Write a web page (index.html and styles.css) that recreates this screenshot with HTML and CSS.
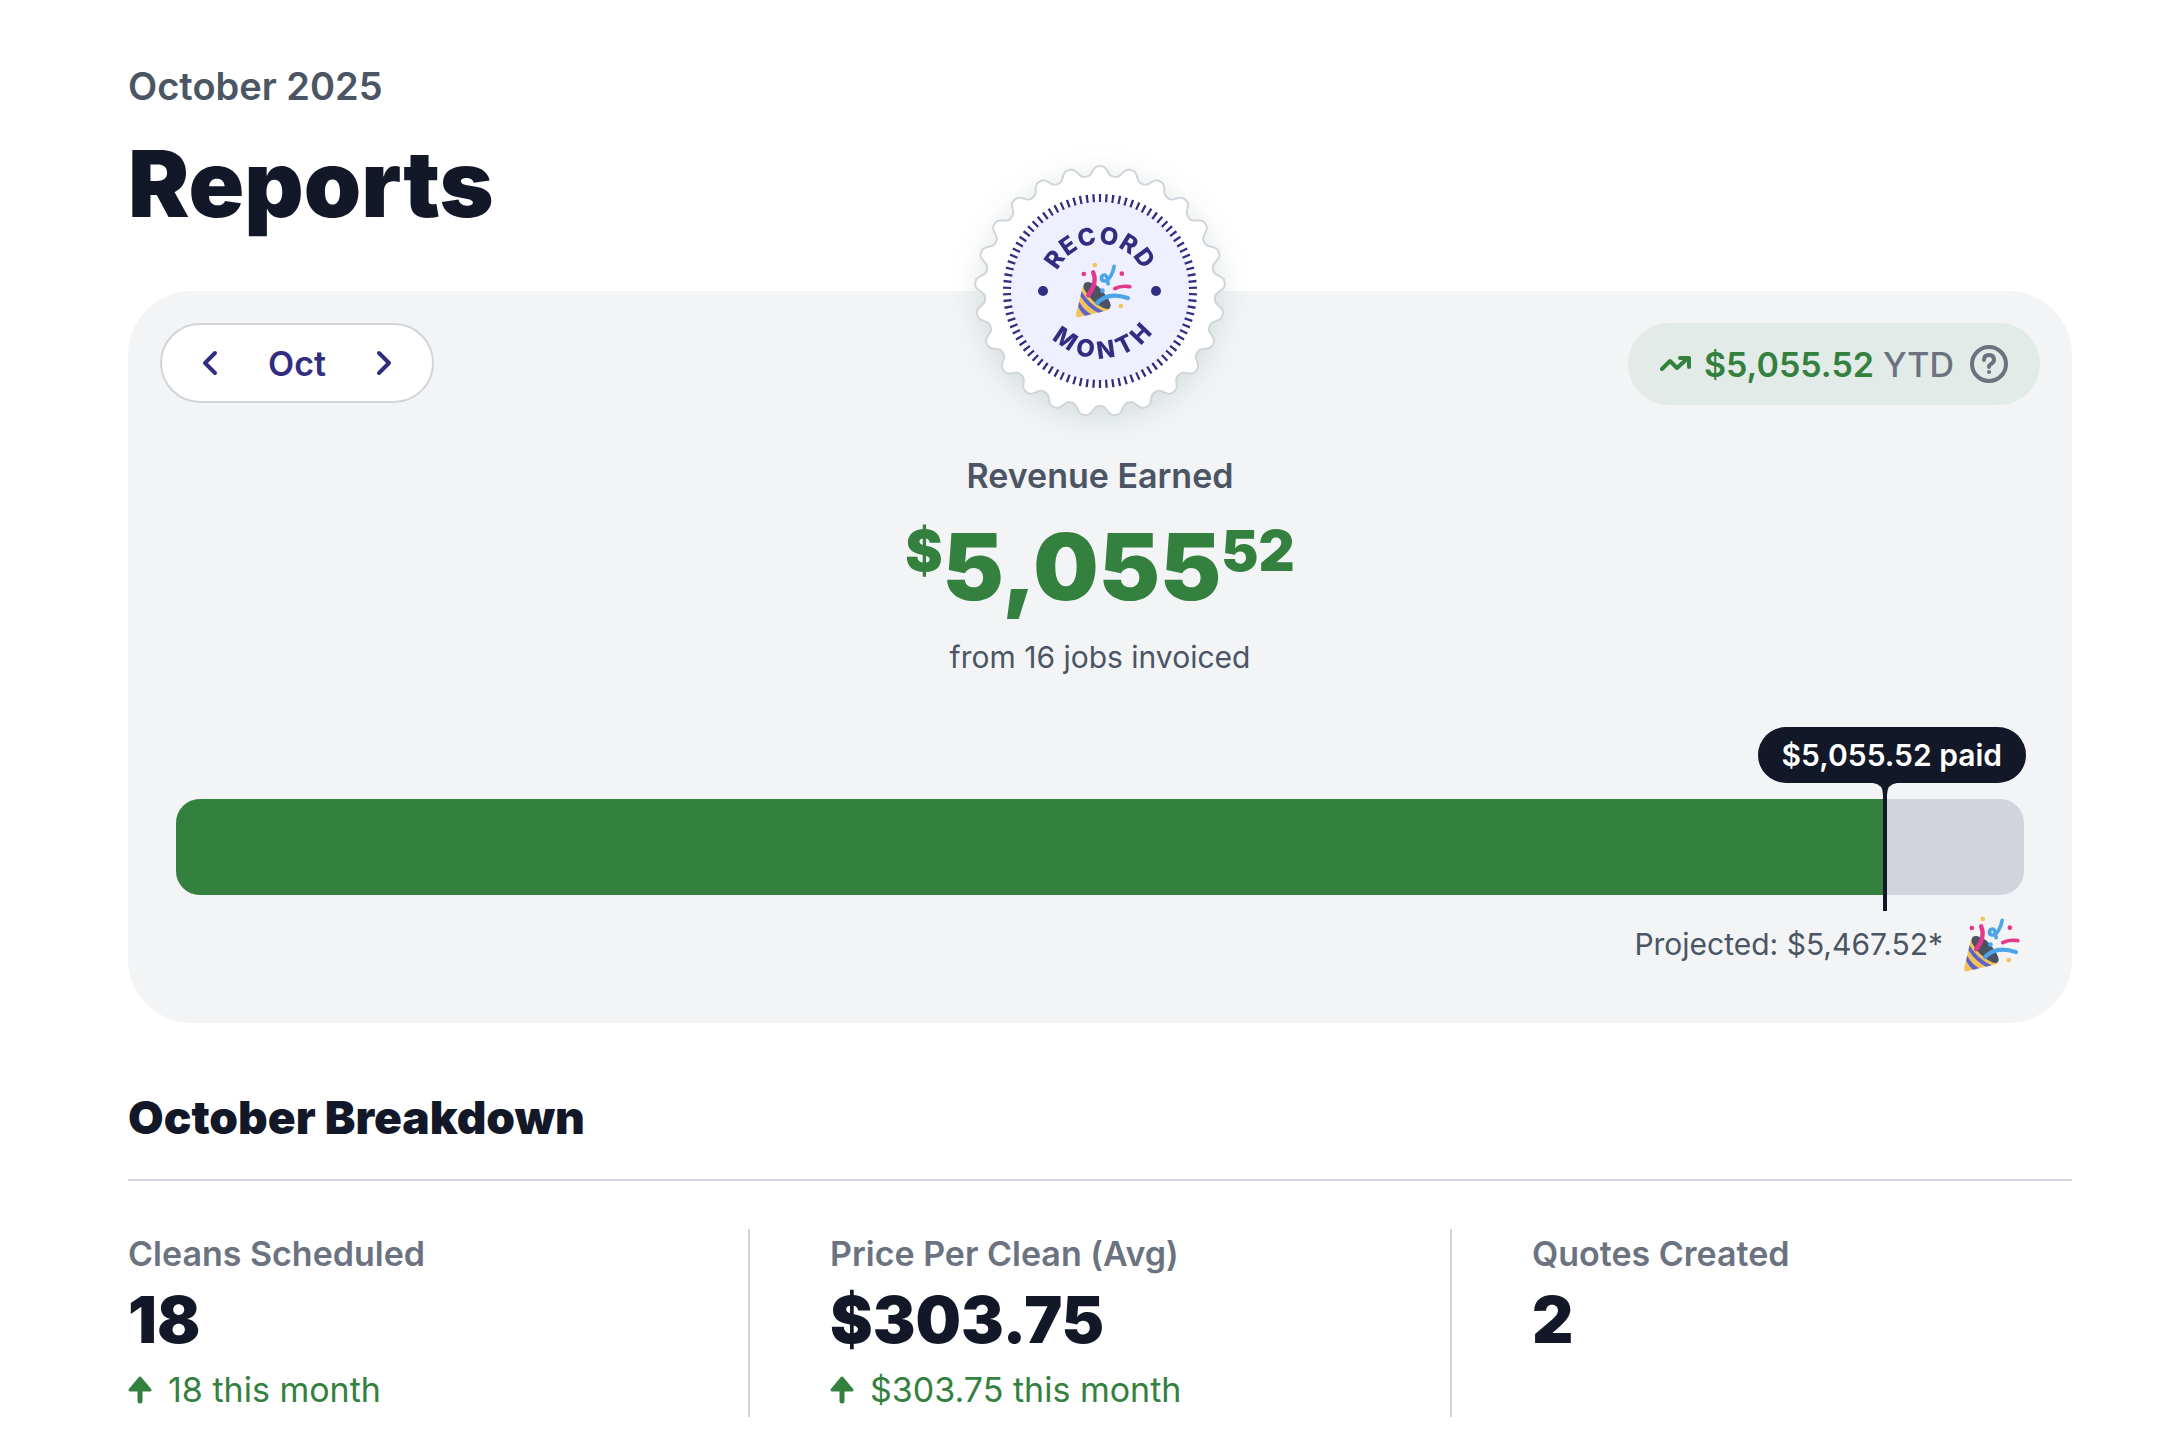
FILE: index.html
```html
<!DOCTYPE html>
<html lang="en">
<head>
    <meta charset="UTF-8">
    <meta name="viewport" content="width=device-width, initial-scale=1.0">
    <title>Reports</title>
    <link rel="stylesheet" href="styles.css">
</head>
<body>
    <!-- Shared confetti icon -->
    <svg class="sprite" aria-hidden="true">
        <symbol id="party" viewBox="70 48 170 168">
            <path d="M94 116 L73 203 Q71 216 84 213 L174 191 Q140 170 94 116 Z" fill="#f2c25b"/>
            <path d="M89 136 L86 151 Q108 186 139 200 L155 196 Q114 178 89 136 Z" fill="#5b62c9"/>
            <path d="M82 167 L79 182 Q87 199 100 209 L118 205 Q95 191 82 167 Z" fill="#5b62c9"/>
            <path d="M96 128 Q92 106 110 108 Q136 111 160 145 Q184 178 174 187 Q168 191 155 186 Q118 168 96 128 Z" fill="#4b5262"/>
            <g fill="none" stroke-linecap="round" stroke-linejoin="round">
                <path d="M124 79 Q138 110 109 148" stroke="#e4388c" stroke-width="13"/>
                <path d="M189 128 Q206 118 234 122" stroke="#e4388c" stroke-width="11"/>
                <path d="M136 171 Q168 136 228 156" stroke="#4ba5e8" stroke-width="13"/>
                <path d="M187 61 C184 80 172 106 157 105 C145 103 147 88 158 87 C167 86 166 104 169 113" stroke="#4ba5e8" stroke-width="11"/>
            </g>
            <circle cx="96" cy="84" r="7" fill="#e4388c"/>
            <circle cx="210" cy="83" r="7" fill="#e4388c"/>
            <circle cx="129" cy="57" r="7" fill="#f2c25b"/>
            <circle cx="207" cy="180" r="7" fill="#f2c25b"/>
            <circle cx="152" cy="134" r="7" fill="#4ba5e8"/>
        </symbol>
    </svg>

    <main class="page">
        <header class="page-header">
            <p class="period">October 2025</p>
            <h1>Reports</h1>
        </header>

        <section class="revenue-card">
            <svg class="badge" viewBox="-130 -130 260 260" role="img" aria-label="Record month">
                <path class="badge-edge" id="badge-edge"/>
                <circle r="91" fill="#eef0ff"/>
                <circle class="badge-ticks" r="93" pathLength="360"/>
                <circle class="badge-dot" cx="-57" r="5"/>
                <circle class="badge-dot" cx="56" r="5"/>
                <path id="arc-top" d="M-47 0 A47 47 0 0 1 47 0" fill="none"/>
                <path id="arc-bottom" d="M-67 6 A67 67 0 0 0 67 -6" fill="none"/>
                <text class="badge-text"><textPath href="#arc-top" startOffset="50%">RECORD</textPath></text>
                <text class="badge-text badge-text-bottom"><textPath href="#arc-bottom" startOffset="50%">MONTH</textPath></text>
                <use href="#party" x="-25" y="-29" width="57" height="56"/>
            </svg>

            <div class="toolbar">
                <div class="month-nav">
                    <button type="button" aria-label="Previous month">
                        <svg width="18" height="28" viewBox="0 0 18 28"><path d="M14 4 L4 14 L14 24"/></svg>
                    </button>
                    <span>Oct</span>
                    <button type="button" aria-label="Next month">
                        <svg width="18" height="28" viewBox="0 0 18 28"><path d="M4 4 L14 14 L4 24"/></svg>
                    </button>
                </div>
                <div class="ytd">
                    <svg class="ytd-trend" width="32" height="20" viewBox="0 0 32 20"><path d="M2 15 L10 7 L17 14 L28 4 M20 4 H29 V13"/></svg>
                    <p><strong>$5,055.52</strong> YTD</p>
                    <button type="button" class="help" aria-label="About this total">
                        <svg width="38" height="38" viewBox="0 0 38 38">
                            <circle cx="19" cy="19" r="17"/>
                            <path d="M14 15 Q14 10 19 10 Q24 10 24 15 Q24 17 21 19 Q19 20 19 22"/>
                            <circle class="help-point" cx="19" cy="27" r="2"/>
                        </svg>
                    </button>
                </div>
            </div>

            <div class="revenue">
                <h2>Revenue Earned</h2>
                <p class="amount"><span>$</span>5,055<span>52</span></p>
                <p class="source">from 16 jobs invoiced</p>
            </div>

            <div class="progress">
                <div class="progress-bar">
                    <div class="progress-fill" style="width: 92.46%"></div>
                </div>
                <div class="marker" style="left: 92.46%">
                    <svg width="24" height="12" viewBox="0 0 24 12"><path d="M0 0 H24 Q14 1 14 12 H10 Q10 1 0 0 Z" fill="#121828"/></svg>
                </div>
                <span class="paid">$5,055.52 paid</span>
            </div>
            <div class="projected">
                <span>Projected: $5,467.52*</span>
                <svg width="57" height="56" aria-hidden="true"><use href="#party"/></svg>
            </div>
        </section>

        <section class="breakdown">
            <h2>October Breakdown</h2>
            <div class="stats">
                <div class="stat">
                    <h3>Cleans Scheduled</h3>
                    <p class="value">18</p>
                    <p class="change">
                        <svg width="24" height="30" viewBox="0 0 24 30"><path d="M12 16 V26" stroke-width="5"/><path class="head" d="M12 3 L22 15 H2 Z"/></svg>
                        18 this month
                    </p>
                </div>
                <div class="stat">
                    <h3>Price Per Clean (Avg)</h3>
                    <p class="value">$303.75</p>
                    <p class="change">
                        <svg width="24" height="30" viewBox="0 0 24 30"><path d="M12 16 V26" stroke-width="5"/><path class="head" d="M12 3 L22 15 H2 Z"/></svg>
                        $303.75 this month
                    </p>
                </div>
                <div class="stat">
                    <h3>Quotes Created</h3>
                    <p class="value">2</p>
                </div>
            </div>
        </section>
    </main>

    <script src="badge.js"></script>
</body>
</html>
```

FILE: styles.css
```css
* {
    box-sizing: border-box;
}

body {
    margin: 0;
    background: #ffffff;
    color: #121828;
    font-family: Inter, "Liberation Sans", sans-serif;
}

h1, h2, h3, p {
    margin: 0;
}

button {
    padding: 0;
    border: none;
    background: none;
    cursor: pointer;
}

.sprite {
    display: none;
}

.page {
    padding: 62px 100px 20px 128px;
}

.period {
    color: #4b5563;
    font-size: 38px;
    font-weight: 600;
    line-height: 48px;
}

h1 {
    margin: 26px 0 59px;
    font-size: 92px;
    font-weight: 900;
    line-height: 96px;
}

/* Revenue card */
.revenue-card {
    position: relative;
    padding: 32px 32px 51px;
    border-radius: 64px;
    background: #f2f4f6;
}

.badge {
    position: absolute;
    top: 0;
    left: 50%;
    width: 260px;
    height: 260px;
    transform: translate(-50%, -50%);
    overflow: visible;
    filter: drop-shadow(0 6px 14px rgba(40, 90, 70, 0.14));
}

.badge-edge {
    fill: #ffffff;
    stroke: #d1d5db;
    stroke-width: 2;
}

.badge-ticks {
    fill: none;
    stroke: #312e81;
    stroke-width: 8;
    stroke-dasharray: 1.4 2.6;
    stroke-dashoffset: 0.7;
    transform: rotate(-90deg);
}

.badge-dot {
    fill: #312e81;
}

.badge-text {
    fill: #312e81;
    font-size: 24px;
    font-weight: 800;
    letter-spacing: 1px;
    text-anchor: middle;
}

.badge-text-bottom {
    letter-spacing: 5px;
}

.toolbar {
    display: flex;
    justify-content: space-between;
    align-items: flex-start;
    height: 82px;
}

.month-nav {
    display: flex;
    align-items: center;
    gap: 36px;
    height: 80px;
    padding: 0 26px;
    border: 2px solid #d1d5db;
    border-radius: 40px;
    background: #ffffff;
    color: #312e81;
    font-size: 34px;
    font-weight: 600;
}

.month-nav button {
    display: flex;
    justify-content: center;
    align-items: center;
    width: 44px;
    height: 44px;
}

.month-nav path {
    fill: none;
    stroke: #312e81;
    stroke-width: 4;
    stroke-linecap: round;
    stroke-linejoin: round;
}

.ytd {
    display: flex;
    align-items: center;
    height: 82px;
    padding: 0 32px;
    border-radius: 41px;
    background: #e2ebe7;
    color: #6b7280;
    font-size: 34px;
    font-weight: 500;
}

.ytd strong {
    color: #34803e;
    font-weight: 600;
}

.ytd-trend {
    margin-right: 12px;
}

.ytd-trend path {
    fill: none;
    stroke: #34803e;
    stroke-width: 4;
    stroke-linecap: round;
    stroke-linejoin: round;
}

.help {
    display: flex;
    margin-left: 16px;
}

.help svg {
    fill: none;
    stroke: #6b7280;
    stroke-width: 4;
    stroke-linecap: round;
}

.help .help-point {
    fill: #6b7280;
    stroke: none;
}

.revenue {
    margin-top: 49px;
    text-align: center;
}

.revenue h2 {
    color: #4b5563;
    font-size: 34px;
    font-weight: 600;
    line-height: 44px;
}

.amount {
    display: flex;
    justify-content: center;
    margin: 21px 0 22px;
    color: #34803e;
    font-size: 92px;
    font-weight: 900;
    line-height: 96px;
}

.amount span {
    font-size: 56px;
    line-height: 64px;
}

.source {
    color: #4b5563;
    font-size: 30px;
    line-height: 40px;
}

/* Progress towards the projected amount */
.progress {
    position: relative;
    margin: 50px 16px 0;
    padding-top: 72px;
}

.progress-bar {
    height: 96px;
    border-radius: 24px;
    background: #d1d5db;
    overflow: hidden;
}

.progress-fill {
    height: 100%;
    background: #34803e;
}

.marker {
    position: absolute;
    top: 56px;
    bottom: -16px;
    width: 4px;
    margin-left: -2px;
    background: #121828;
}

.marker svg {
    position: absolute;
    top: 0;
    left: -10px;
}

.paid {
    position: absolute;
    top: 0;
    right: -2px;
    padding: 0 24px;
    border-radius: 28px;
    background: #121828;
    color: #ffffff;
    font-size: 30px;
    font-weight: 600;
    line-height: 56px;
}

.projected {
    display: flex;
    justify-content: flex-end;
    align-items: center;
    gap: 20px;
    margin: 21px 20px 0;
    color: #4b5563;
    font-size: 30px;
}

/* Breakdown */
.breakdown h2 {
    margin-top: 68px;
    padding-bottom: 36px;
    border-bottom: 2px solid #d1d5db;
    font-size: 46px;
    font-weight: 900;
    line-height: 52px;
}

.stats {
    display: grid;
    grid-template-columns: repeat(3, 1fr);
    gap: 162px;
    margin-top: 48px;
}

.stat {
    position: relative;
    padding: 3px 0 5px;
}

.stat + .stat::before {
    content: '';
    position: absolute;
    top: 0;
    bottom: 0;
    left: -82px;
    width: 2px;
    background: #d1d5db;
}

.stat h3 {
    color: #6b7280;
    font-size: 34px;
    font-weight: 600;
    line-height: 44px;
}

.value {
    margin: 8px 0 12px;
    font-size: 64px;
    font-weight: 900;
    line-height: 72px;
}

.change {
    display: flex;
    align-items: center;
    gap: 16px;
    color: #34803e;
    font-size: 34px;
    line-height: 44px;
}

.change path {
    fill: none;
    stroke: #34803e;
    stroke-linecap: round;
    stroke-linejoin: round;
}

.change .head {
    fill: #34803e;
    stroke-width: 3;
}
```

FILE: badge.js
```js
// Scalloped outline of the record badge
const bumps = 25;
const steps = bumps * 24;
let outline = '';

for (let i = 0; i < steps; i++) {
    const angle = (i / steps) * Math.PI * 2;
    // sin() of the wave rounds off the tips
    const wave = Math.sin(1.4 * Math.cos(angle * bumps));
    const radius = 120 + 5 * wave;
    const x = radius * Math.sin(angle);
    const y = -radius * Math.cos(angle);
    outline += (i === 0 ? 'M' : 'L') + x.toFixed(2) + ' ' + y.toFixed(2);
}

document.getElementById('badge-edge').setAttribute('d', outline + 'Z');
```
